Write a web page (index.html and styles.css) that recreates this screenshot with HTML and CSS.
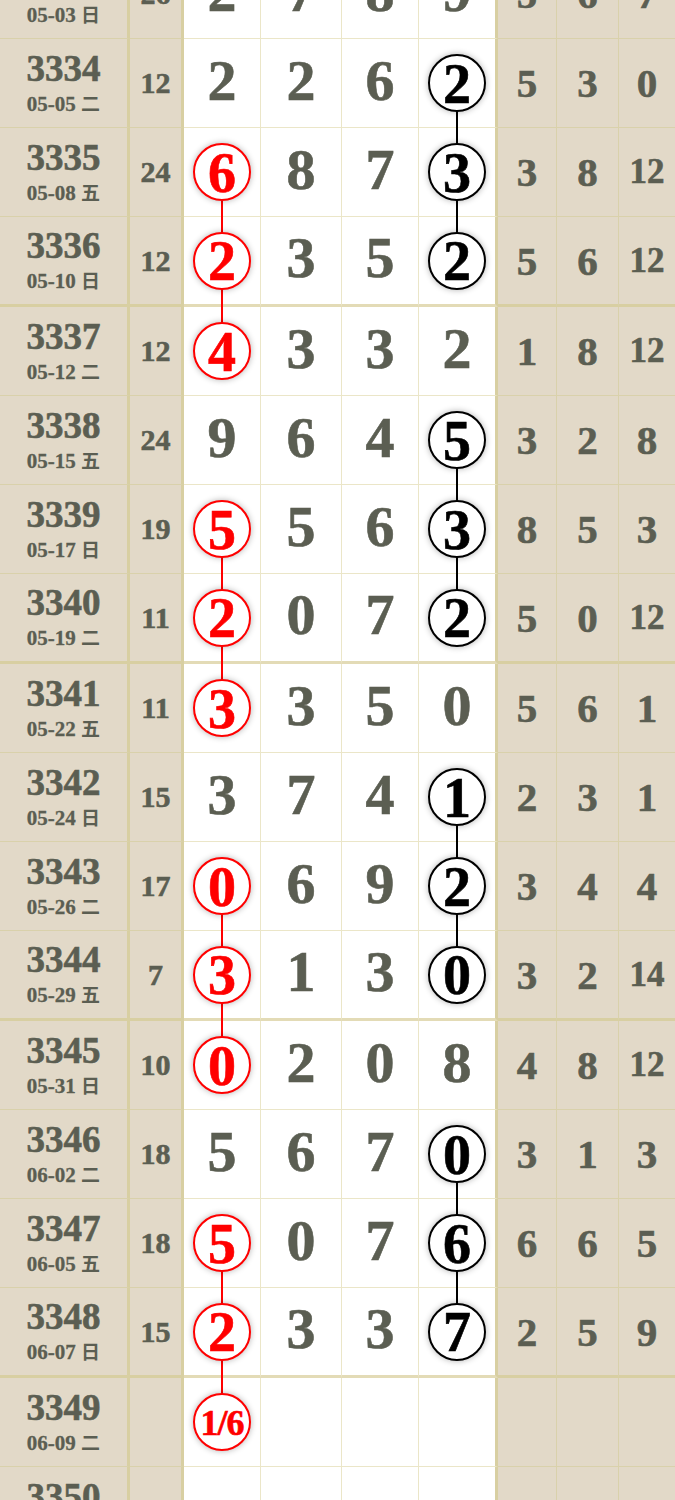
FILE: index.html
```html
<!DOCTYPE html>
<html lang="zh-CN">
<head>
    <meta charset="UTF-8">
    <meta name="viewport" content="width=device-width, initial-scale=1.0">
    <title>走势图</title>
    <link rel="stylesheet" href="styles.css">
</head>
<body>
    <div class="chart" id="chart">
        <!-- rows are built from the data below -->
    </div>

    <script>
        // [issue, date, weekday, sum, digits, right, red index, black index, red link down, black link down]
        const rows = [
            ['3333', '05-03', '日', '26', ['2','7','8','9'], ['5','6','7'], -1, -1, false, false],
            ['3334', '05-05', '二', '12', ['2','2','6','2'], ['5','3','0'], -1, 3, false, true],
            ['3335', '05-08', '五', '24', ['6','8','7','3'], ['3','8','12'], 0, 3, true, true],
            ['3336', '05-10', '日', '12', ['2','3','5','2'], ['5','6','12'], 0, 3, true, false],
            ['3337', '05-12', '二', '12', ['4','3','3','2'], ['1','8','12'], 0, -1, false, false],
            ['3338', '05-15', '五', '24', ['9','6','4','5'], ['3','2','8'], -1, 3, false, true],
            ['3339', '05-17', '日', '19', ['5','5','6','3'], ['8','5','3'], 0, 3, true, true],
            ['3340', '05-19', '二', '11', ['2','0','7','2'], ['5','0','12'], 0, 3, true, false],
            ['3341', '05-22', '五', '11', ['3','3','5','0'], ['5','6','1'], 0, -1, false, false],
            ['3342', '05-24', '日', '15', ['3','7','4','1'], ['2','3','1'], -1, 3, false, true],
            ['3343', '05-26', '二', '17', ['0','6','9','2'], ['3','4','4'], 0, 3, true, true],
            ['3344', '05-29', '五', '7', ['3','1','3','0'], ['3','2','14'], 0, 3, true, false],
            ['3345', '05-31', '日', '10', ['0','2','0','8'], ['4','8','12'], 0, -1, false, false],
            ['3346', '06-02', '二', '18', ['5','6','7','0'], ['3','1','3'], -1, 3, false, true],
            ['3347', '06-05', '五', '18', ['5','0','7','6'], ['6','6','5'], 0, 3, true, true],
            ['3348', '06-07', '日', '15', ['2','3','3','7'], ['2','5','9'], 0, 3, true, false],
            ['3349', '06-09', '二', '', ['1/6','','',''], ['','',''], 0, -1, false, false],
            ['3350', '06-12', '五', '', ['','','',''], ['','',''], -1, -1, false, false]
        ];

        const chart = document.getElementById('chart');

        rows.forEach((r, i) => {
            const [issue, date, day, sum, digits, right, red, black, redLink, blackLink] = r;
            const row = document.createElement('div');
            row.className = 'row' + (i % 4 === 3 ? ' end' : '');

            let html = `
                <div class="cell issue">
                    <span class="no">${issue}</span>
                    <span class="date">${date} <span class="day">${day}</span></span>
                </div>
                <div class="cell sum">${sum}</div>
            `;

            digits.forEach((d, k) => {
                let inner = `<span class="digit">${d}</span>`;
                if (k === red) {
                    inner = `<span class="ball red${d.length > 1 ? ' small' : ''}">${d}</span>`;
                    if (redLink) inner += '<span class="link red"></span>';
                } else if (k === black) {
                    inner = `<span class="ball black">${d}</span>`;
                    if (blackLink) inner += '<span class="link black"></span>';
                }
                html += `<div class="cell num${k === 3 ? ' last' : ''}">${inner}</div>`;
            });

            right.forEach((d, k) => {
                html += `<div class="cell side${d.length > 1 ? ' two' : ''}${k === 2 ? ' last' : ''}">${d}</div>`;
            });

            row.innerHTML = html;
            chart.appendChild(row);
        });
    </script>
</body>
</html>
```

FILE: styles.css
```css
body {
    margin: 0;
    background-color: #fff;
    font-family: "Liberation Serif", "Noto Sans CJK SC", serif;
    color: #5b5e52;
    overflow: hidden;
}
.chart {
    width: 675px;
    margin-top: -50px;
}
.row {
    display: grid;
    grid-template-columns: 130px 54px 77px 81px 77px 79px 59px 62px 56px;
    height: 89px;
}
.cell {
    box-sizing: border-box;
    position: relative;
    display: flex;
    align-items: center;
    justify-content: center;
    font-weight: bold;
    -webkit-text-stroke: 0.6px currentColor;
    background-color: #e2d9c8;
    border-right: 1px solid #d9d1ab;
    border-bottom: 1px solid #d9d1ab;
}
.row.end {
    height: 90px;
}
.row.end .cell {
    border-bottom: 3px solid #d8cfa2;
}
.issue {
    flex-direction: column;
    border-right: 3px solid #d8cfa2;
}
.issue .no {
    font-size: 37px;
    line-height: 34px;
}
.issue .date {
    font-size: 21px;
    line-height: 22px;
    margin-top: 6px;
    -webkit-text-stroke: 0.3px currentColor;
}
.issue .day {
    font-family: "Noto Sans CJK SC", sans-serif;
    font-size: 19px;
    -webkit-text-stroke: 0;
}
.sum {
    font-size: 30px;
    border-right: 3px solid #d8cfa2;
}
.num {
    background-color: #fff;
    font-size: 58px;
    border-right-color: #ebe6c8;
    border-bottom-color: #ebe6c8;
}
.num .digit {
    margin-bottom: 6px;
}
.num.last {
    border-right: 3px solid #d8cfa2;
}
.row.end .num {
    border-bottom-color: #e3dbb6;
}
.side {
    font-size: 41px;
}
.side.two {
    font-size: 35px;
}
.side.last {
    border-right: none;
}
.ball {
    position: relative;
    z-index: 2;
    box-sizing: border-box;
    width: 58px;
    height: 58px;
    border-radius: 50%;
    background-color: #fff;
    border: 2px solid;
    display: flex;
    align-items: center;
    justify-content: center;
    font-size: 56px;
    line-height: 1;
    padding-top: 1px;
    box-shadow: 0 0 6px rgba(0, 0, 0, 0.3);
}
.ball.red {
    color: #ff0000;
    border-color: #ff0000;
}
.ball.black {
    color: #000;
    border-color: #000;
}
.ball.small {
    font-size: 36px;
    letter-spacing: -1px;
}
.link {
    position: absolute;
    z-index: 1;
    left: 50%;
    top: 50%;
    width: 2px;
    height: 90px;
    margin-left: -1px;
}
.link.red {
    background-color: #ff0000;
}
.link.black {
    background-color: #000;
}
```
